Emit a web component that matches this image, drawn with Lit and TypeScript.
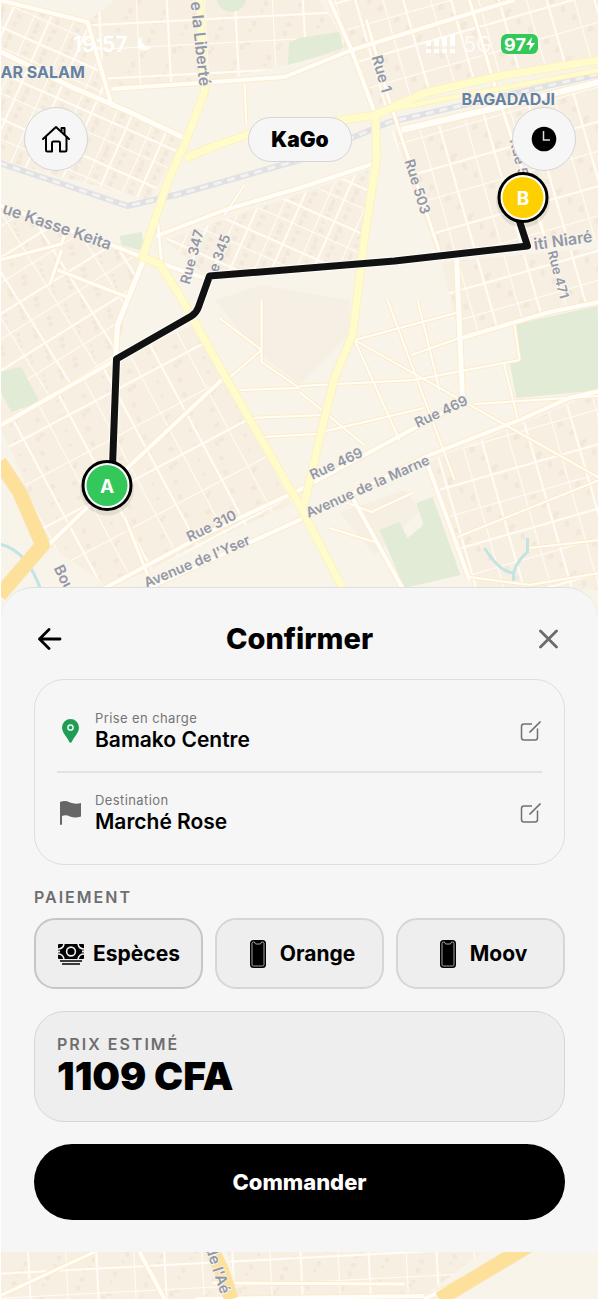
import { LitElement, html, svg, css } from 'lit';
import { customElement, property, state } from 'lit/decorators.js';
import { classMap } from 'lit/directives/class-map.js';

const DISTRICTS = [
  { fill: 'streets-a', points: '0,0 88,20 112,105 185,138 150,200 0,160' },
  { fill: 'streets-c', points: '115,0 320,0 350,50 205,84 112,90 90,20' },
  { fill: 'streets-b', points: '330,0 600,0 600,60 420,95 376,112' },
  { fill: 'streets-b', points: '392,132 600,85 600,240 528,245 440,258' },
  { fill: 'streets-b', points: '442,262 600,248 600,302 460,338' },
  { fill: 'streets-e', points: '0,205 140,257 116,358 0,422' },
  { fill: 'streets-d', points: '0,426 116,360 200,322 300,500 110,588 50,545 20,470' },
  { fill: 'streets-a', points: '165,240 370,170 358,262 210,278' },
  { fill: 'streets-b', points: '430,462 600,392 600,590 474,588' },
  { fill: 'streets-c', points: '0,1240 200,1240 232,1299 0,1299' },
  { fill: 'streets-c', points: '225,1240 500,1240 420,1299 240,1299' },
];

const ROADS = [
  { width: 4, d: 'M0,0 L88,22 L112,105' },
  { width: 5, d: 'M0,51 L70,86 L130,112 L185,138' },
  { width: 4, d: 'M112,89 L285,77 L352,50 L472,13 L515,0' },
  { width: 4, d: 'M330,0 L352,50 L376,115' },
  { width: 3, d: 'M367,20 L388,95 L440,252' },
  { width: 3, d: 'M470,0 L498,95 L548,245' },
  { width: 6, d: 'M402,130 L500,107 L600,82' },
  { width: 4, d: 'M157,236 L225,210 L300,188 L376,163' },
  { width: 3, d: 'M158,220 L162,262' },
  { width: 4, d: 'M0,205 L112,245 L145,258 L205,278' },
  { width: 3, d: 'M0,260 L62,244 L68,226' },
  { width: 3, d: 'M58,270 L130,298 M62,250 L50,285' },
  { width: 5, d: 'M144,260 L118,325 L116,358' },
  { width: 4, d: 'M0,426 L116,360' },
  { width: 4, d: 'M48,546 L130,466 L222,380' },
  { width: 4, d: 'M98,592 L210,532 L300,490 L467,400' },
  { width: 4, d: 'M140,592 L300,520 L430,455 L520,420 L570,398 L600,391' },
  { width: 5, d: 'M457,258 L463,398' },
  { width: 4, d: 'M462,338 L550,312 L600,302' },
  { width: 4, d: 'M352,496 L405,592' },
  { width: 4, d: 'M428,464 L470,580' },
  { width: 3, d: 'M125,517 L155,592' },
  { width: 2, d: 'M355,340 L600,478 M300,386 L415,380 L520,360' },
  { width: 2, d: 'M355,340 L400,440 M388,300 L455,480 M418,300 L440,390' },
  { width: 2, d: 'M355,340 L460,312 M412,355 L460,338 M504,362 L518,418' },
  { width: 2, d: 'M475,404 L600,396 M300,392 L365,445 M322,432 L425,408' },
  { width: 2, d: 'M227,380 L262,350 L220,318 M262,300 L262,362 L300,388 M240,390 L300,388' },
  { width: 2, d: 'M250,418 L322,415 M262,437 L318,434 M340,500 L372,512 L415,492' },
  { width: 2, d: 'M458,537 L600,480 M530,548 L600,540 M470,577 L530,585 L600,573' },
  { width: 2, d: 'M515,325 L520,360 M330,528 L375,542 M245,185 L225,215 M245,85 L247,125' },
  { width: 4, d: 'M518,1252 L425,1299' },
  { width: 4, d: 'M140,1252 L165,1299 M196,1299 L425,1296' },
  { width: 3, d: 'M95,1252 L0,1296 M213,1283 L405,1284' },
];

const AVENUES = [
  { width: 7, d: 'M200,0 L205,92 L186,142 L168,182 L143,257 L160,264 L180,295 L222,370 L258,433 L300,505 L345,592' },
  { width: 7, d: 'M186,158 L215,146 L250,134 L376,115 L425,93 L500,76 L600,60' },
  { width: 4, d: 'M376,112 L450,98 L600,70' },
  { width: 7, d: 'M376,115 L377,160 L366,230 L353,335 L335,378 L322,430 L308,490 L303,510' },
];

const HIGHWAYS = [
  { width: 13, d: 'M0,462 L20,492 L43,545 L0,595' },
  { width: 13, d: 'M210,1245 L222,1270 L232,1299' },
  { width: 13, d: 'M530,1245 L440,1299' },
];

const PLACES = [
  { x: 1, y: 78, text: 'AR SALAM' },
  { x: 462, y: 105, text: 'BAGADADJI' },
];

const STREET_NAMES = [
  { x: 191, y: 2, angle: 84, size: 16, text: 'e la Liberté' },
  { x: 372, y: 57, angle: 74, size: 15, text: 'Rue 1' },
  { x: 405, y: 161, angle: 73, size: 14, text: 'Rue 503' },
  { x: 510, y: 140, angle: 76, size: 14, text: 'Rue 5' },
  { x: 2, y: 213, angle: 19, size: 16, text: 'ue Kasse Keita' },
  { x: 190, y: 285, angle: -75, size: 14, text: 'Rue 347' },
  { x: 218, y: 273, angle: -70, size: 14, text: 'e 345' },
  { x: 535, y: 250, angle: -8, size: 16, text: 'iti Niaré' },
  { x: 548, y: 252, angle: 75, size: 13, text: 'Rue 471' },
  { x: 418, y: 428, angle: -25, size: 14, text: 'Rue 469' },
  { x: 313, y: 480, angle: -25, size: 14, text: 'Rue 469' },
  { x: 309, y: 518, angle: -24, size: 14, text: 'Avenue de la Marne' },
  { x: 190, y: 542, angle: -26, size: 14, text: 'Rue 310' },
  { x: 147, y: 588, angle: -23, size: 14, text: "Avenue de l'Yser" },
  { x: 54, y: 568, angle: 64, size: 15, text: 'Bou' },
  { x: 206, y: 1248, angle: 72, size: 15, text: "de l'Aé" },
];

const ROUTE = 'M113,466 L117,359 L192,316 Q197,313 199,307 L210,276 L395,261 L528,246 L518,215';

@customElement('city-map')
export class CityMap extends LitElement {
  static styles = css`
    :host {
      display: block;
      overflow: hidden;
    }

    svg {
      display: block;
      width: 100%;
      height: 100%;
      fill: none;
      stroke-linejoin: round;
    }

    .land { fill: #f9f4ea; }
    .park { fill: #e1ebd5; }
    .square { fill: #f6efe4; }
    .block { fill: #f7efe2; }
    .building { fill: #f1e8da; }
    .street-edge { stroke: #fdf0da; stroke-width: 3; }
    .street { stroke: #fffdf8; stroke-width: 2; }
    .casing { stroke: #fdebc8; }
    .road { stroke: #fffefb; }
    .avenue-casing { stroke: #fbf1c4; }
    .avenue { stroke: #fffbcb; }
    .highway-casing { stroke: #fae3ab; }
    .highway { stroke: #fde19b; }
    .rail { stroke: #e0e1e5; stroke-width: 6; }
    .rail-ties { stroke: #f4f2ee; stroke-width: 3; stroke-dasharray: 8 6; }
    .water { stroke: #c4e4e4; stroke-width: 3; }

    text { font-family: Inter, 'Liberation Sans', sans-serif; }

    .place {
      fill: #6682a3;
      stroke: #f9f4ea;
      stroke-width: 2;
      paint-order: stroke;
      font-size: 16px;
      font-weight: 700;
    }

    .street-name {
      fill: #9398a8;
      stroke: #f9f4ea;
      stroke-width: 2;
      paint-order: stroke;
      font-weight: 600;
    }

    .route-halo { stroke: #fff; stroke-width: 9; opacity: 0.8; }
    .route { stroke: #111; stroke-width: 7; }
    .marker-shadow { fill: #000; opacity: 0.08; }
    .marker-ring { fill: #fff; stroke: #000; stroke-width: 3; }
    .marker-start { fill: #34c759; }
    .marker-end { fill: #ffd000; }

    .marker-label {
      fill: #fff;
      font-size: 19px;
      font-weight: 700;
      text-anchor: middle;
    }
  `;

  // one tile holds 2x2 uneven blocks, so the streets do not look like graph paper
  pattern(id: string, width: number, height: number, angle: number) {
    const w = width * 2;
    const h = height * 2;
    const streets = `M0,0 H${w} M0,${height + 3} H${w} M0,0 V${h} M${width - 3},0 V${h}`;
    const buildings = Array.from({ length: 14 }, (_, i) => ({
      x: (i * 17 + 5) % (w - 4),
      y: (i * 23 + 4) % (h - 4),
      width: 3 + (i % 3),
      height: 3 + ((i * 2) % 3),
    }));
    return svg`
      <pattern id=${id} width=${w} height=${h} patternUnits="userSpaceOnUse"
        patternTransform="rotate(${angle})">
        <rect class="block" width=${w} height=${h}></rect>
        ${buildings.map((b) => svg`<rect class="building" x=${b.x} y=${b.y} width=${b.width} height=${b.height}></rect>`)}
        <path class="street-edge" d=${streets}></path>
        <path class="street" d=${streets}></path>
      </pattern>
    `;
  }

  lines(roads: { width: number; d: string }[], name: string, extra = 0) {
    return roads.map((r) => svg`<path class=${name} d=${r.d} stroke-width=${r.width + extra}></path>`);
  }

  marker(x: number, y: number, label: string, name: string) {
    return svg`
      <circle class="marker-shadow" cx=${x} cy=${y + 3} r="27"></circle>
      <circle class="marker-ring" cx=${x} cy=${y} r="24"></circle>
      <circle class=${name} cx=${x} cy=${y} r="20.500"></circle>
      <text class="marker-label" x=${x} y=${y + 7}>${label}</text>
    `;
  }

  render() {
    return html`
      <svg viewBox="0 0 600 1299" preserveAspectRatio="xMidYMid slice" role="img" aria-label="Bamako">
        <defs>
          ${this.pattern('streets-a', 19, 21, 24)}
          ${this.pattern('streets-b', 23, 31, -16)}
          ${this.pattern('streets-c', 34, 27, -3)}
          ${this.pattern('streets-d', 26, 44, -28)}
          ${this.pattern('streets-e', 28, 24, -32)}
        </defs>
        <rect class="land" width="600" height="1299"></rect>
        ${DISTRICTS.map((d) => svg`<polygon points=${d.points} fill="url(#${d.fill})"></polygon>`)}
        <polygon class="square" points="215,300 262,285 350,300 350,335 300,385 258,352"></polygon>
        <polygon class="square" points="375,555 340,512 405,490 422,510"></polygon>
        <polygon class="park" points="513,325 598,306 600,390 517,398 510,362 520,358"></polygon>
        <polygon class="park" points="380,530 400,522 408,538 424,525 417,503 433,497 461,575 405,588"></polygon>
        <polygon class="park" points="0,372 22,367 40,402 12,412 0,390"></polygon>
        <polygon class="park" points="300,38 340,32 344,48 300,62 288,65 290,42"></polygon>
        <polygon class="park" points="120,236 142,232 146,252 122,245"></polygon>
        <circle class="park" cx="232" cy="-3" r="15"></circle>
        <path class="rail" d="M0,163 L60,183 L128,206 L180,194 L300,160 L390,122 L600,74"></path>
        <path class="rail-ties" d="M0,163 L60,183 L128,206 L180,194 L300,160 L390,122 L600,74"></path>
        <path class="water" d="M0,544 Q28,550 42,592 M485,548 Q500,572 514,573 Q518,560 528,552 V538 M514,573 V582"></path>
        ${this.lines(ROADS, 'casing', 2)}
        ${this.lines(ROADS, 'road')}
        ${this.lines(AVENUES, 'avenue-casing', 2)}
        ${this.lines(AVENUES, 'avenue')}
        ${this.lines(HIGHWAYS, 'highway-casing', 2)}
        ${this.lines(HIGHWAYS, 'highway')}
        ${PLACES.map((p) => svg`<text class="place" x=${p.x} y=${p.y}>${p.text}</text>`)}
        ${STREET_NAMES.map((s) => svg`
          <text class="street-name" font-size=${s.size} transform="translate(${s.x} ${s.y}) rotate(${s.angle})">${s.text}</text>
        `)}
        <path class="route-halo" d=${ROUTE}></path>
        <path class="route" d=${ROUTE}></path>
        ${this.marker(107.5, 485.5, 'A', 'marker-start')}
        ${this.marker(523.5, 197.5, 'B', 'marker-end')}
      </svg>
    `;
  }
}

const editIcon = html`
  <svg width="22" height="22" viewBox="0 0 22 22" fill="none" stroke="#707070" aria-hidden="true">
    <path d="M12,4 H4 Q1.500,4 1.500,6.500 V17.500 Q1.500,20 4,20 H15 Q17.500,20 17.500,17.500 V8.500" stroke-width="1.500"></path>
    <path d="M9.500,12.500 L20.500,1.500" stroke-width="1.700"></path>
  </svg>
`;

@customElement('trip-stop')
export class TripStop extends LitElement {
  static styles = css`
    :host {
      display: flex;
      align-items: center;
      height: 80px;
    }

    .icon {
      display: flex;
      width: 38px;
    }

    .text {
      flex: 1;
      color: #000;
    }

    .label {
      color: #757575;
      font-size: 13px;
      line-height: 18px;
      letter-spacing: 0.4px;
    }

    .value {
      font-size: 21px;
      font-weight: 600;
      line-height: 26px;
    }

    button {
      display: flex;
      padding: 2px 0;
      border: 0;
      background: none;
      cursor: pointer;
    }
  `;

  @property() label = '';
  @property() value = '';

  render() {
    return html`
      <span class="icon"><slot></slot></span>
      <div class="text">
        <div class="label">${this.label}</div>
        <div class="value">${this.value}</div>
      </div>
      <button aria-label="Modifier">${editIcon}</button>
    `;
  }
}

const cashIcon = html`
  <svg width="28" height="24" viewBox="0 0 28 24" aria-hidden="true">
    <rect x="1" y="2" width="26" height="15" rx="1"></rect>
    <g fill="none" stroke="#eee" stroke-width="1.600">
      <circle cx="14" cy="9.500" r="4.400"></circle>
      <path d="M1,7 Q6,7 7,2 M27,7 Q22,7 21,2 M1,12 Q6,12 7,17 M27,12 Q22,12 21,17"></path>
      <path d="M0,9.500 H3 M25,9.500 H28" stroke-width="2"></path>
    </g>
    <path d="M3,19 H25 M5,22 H23" stroke="#000" stroke-width="1.700"></path>
  </svg>
`;

const phoneIcon = html`
  <svg width="28" height="28" viewBox="0 0 28 28" aria-hidden="true">
    <rect x="6" y="0" width="16" height="28" rx="3.500"></rect>
    <path d="M10.500,2 H9.500 Q8,2 8,3.500 V24.500 Q8,26 9.500,26 H18.500 Q20,26 20,24.500 V3.500 Q20,2 18.500,2 H17.500 Q17,4 16,4 H12 Q11,4 10.500,2 Z"
      fill="none" stroke="#d0d0d0" stroke-width="0.800"></path>
  </svg>
`;

const PAYMENTS = [
  { id: 'cash', name: 'Espèces', icon: cashIcon },
  { id: 'orange', name: 'Orange', icon: phoneIcon },
  { id: 'moov', name: 'Moov', icon: phoneIcon },
];

@customElement('app-root')
export class AppRoot extends LitElement {
  static styles = css`
    :host {
      display: block;
      padding: 0 2px 0 1px;
      background: #fff;
      color: #000;
      font-family: Inter, 'Liberation Sans', sans-serif;
    }

    .screen {
      position: relative;
      display: flex;
      flex-direction: column;
      box-sizing: border-box;
      min-height: 100vh;
      padding-bottom: 47px;
    }

    city-map {
      position: absolute;
      inset: 0;
    }

    .status,
    .topbar,
    .sheet {
      position: relative;
    }

    button {
      padding: 0;
      border: 0;
      background: none;
      color: inherit;
      font-family: inherit;
      cursor: pointer;
    }

    svg {
      display: block;
      flex: none;
    }

    .status {
      display: flex;
      align-items: center;
      justify-content: space-between;
      height: 22px;
      padding: 33px 60px 0 72px;
      color: #fff;
      font-size: 21px;
      font-weight: 600;
    }

    .status-group {
      display: flex;
      align-items: center;
      gap: 9px;
    }

    .network {
      font-weight: 400;
      opacity: 0.8;
    }

    .battery {
      display: flex;
      align-items: center;
      justify-content: center;
      width: 37px;
      height: 20px;
      border-radius: 6px;
      background: #34c759;
      font-size: 18px;
      font-weight: 700;
    }

    .topbar {
      display: flex;
      align-items: center;
      justify-content: space-between;
      padding: 52px 22px 0 23px;
    }

    .round,
    .brand {
      display: flex;
      align-items: center;
      justify-content: center;
      box-sizing: border-box;
      border: 1px solid #d5d5da;
      background: #f6f6f6;
    }

    .round {
      width: 64px;
      height: 64px;
      border-radius: 32px;
    }

    .brand {
      height: 45px;
      padding: 0 22px;
      border-radius: 23px;
      font-size: 21px;
      font-weight: 900;
    }

    .sheet {
      margin-top: auto;
      padding: 28px 33px 32px;
      border-top: 1px solid #e0e0e0;
      border-radius: 32px 32px 0 0;
      background: #f6f6f6;
    }

    .sheet-header {
      display: flex;
      align-items: center;
      justify-content: space-between;
      height: 46px;
    }

    .sheet-header button {
      display: flex;
      justify-content: center;
      width: 32px;
    }

    h1 {
      margin: 0;
      font-size: 29px;
      font-weight: 800;
      line-height: 36px;
    }

    .trip {
      margin-top: 17px;
      padding: 11px 22px;
      border: 1px solid #dedede;
      border-radius: 30px;
    }

    .trip trip-stop + trip-stop {
      border-top: 2px solid #e2e2e2;
    }

    .caption {
      margin: 0;
      color: #6e6e6e;
      font-size: 16px;
      font-weight: 600;
      line-height: 20px;
      letter-spacing: 2px;
    }

    .payments {
      display: grid;
      grid-template-columns: repeat(3, 1fr);
      gap: 12px;
      margin: 11px 0 22px;
    }

    .trip + .caption {
      margin-top: 22px;
    }

    .payment {
      display: flex;
      align-items: center;
      justify-content: center;
      gap: 8px;
      height: 71px;
      border: 2px solid #d6d6d6;
      border-radius: 21px;
      background: #eee;
      font-size: 21px;
      font-weight: 700;
    }

    .payment.selected {
      border-color: #c6c6c6;
    }

    .price {
      padding: 22px 22px 23px;
      border: 1px solid #d6d6d6;
      border-radius: 30px;
      background: #eee;
    }

    .amount {
      font-size: 39px;
      font-weight: 900;
      line-height: 44px;
    }

    .order {
      width: 100%;
      height: 76px;
      margin-top: 22px;
      border-radius: 38px;
      background: #000;
      color: #fff;
      font-size: 22px;
      font-weight: 800;
    }
  `;

  @state() payment = 'cash';

  render() {
    return html`
      <main class="screen">
        <city-map></city-map>

        <div class="status">
          <div class="status-group">
            <span>19:57</span>
            <svg width="16" height="16" viewBox="0 0 16 16" fill="#fff"><path d="M6,1 A7,7 0 1 0 15,10 A7,7 0 0 1 6,1 Z"></path></svg>
          </div>
          <div class="status-group">
            <svg width="30" height="20" viewBox="0 0 30 20" fill="#fff">
              <path d="M1,7 h5 v5 h-5 z M9,5 h5 v7 h-5 z M17,3 h5 v9 h-5 z M25,0 h5 v12 h-5 z"></path>
              <path d="M1,15 h5 v4 h-5 z M9,15 h5 v4 h-5 z M17,15 h5 v4 h-5 z M25,15 h5 v4 h-5 z"></path>
            </svg>
            <span class="network">5G</span>
            <span class="battery">97<svg width="9" height="14" viewBox="0 0 9 14" fill="#fff"><path d="M6,0 L0,8 H4 L3,14 L9,6 H5 Z"></path></svg></span>
          </div>
        </div>

        <div class="topbar">
          <button class="round" aria-label="Accueil">
            <svg width="30" height="30" viewBox="0 0 30 30" fill="none" stroke="#000" stroke-width="2" stroke-linejoin="round" stroke-linecap="round">
              <path d="M2,15 L15,3 L28,15"></path>
              <path d="M5,13 V26 Q5,27.500 6.500,27.500 H11 V19 Q11,17.500 12.500,17.500 H17.500 Q19,17.500 19,19 V27.500 H24 Q25.500,27.500 25.500,26 V13"></path>
              <path d="M20.500,7 V4 H23.500 V10.500"></path>
            </svg>
          </button>
          <div class="brand">KaGo</div>
          <button class="round" aria-label="Historique">
            <svg width="26" height="26" viewBox="0 0 26 26" fill="none">
              <circle cx="13" cy="13" r="12.300" fill="#000"></circle>
              <path d="M12.500,5 V14 H19" stroke="#ddd" stroke-width="1.500"></path>
            </svg>
          </button>
        </div>

        <section class="sheet">
          <header class="sheet-header">
            <button aria-label="Retour">
              <svg width="24" height="24" viewBox="0 0 24 24" fill="none" stroke="#000" stroke-width="2.800" stroke-linecap="round" stroke-linejoin="round">
                <path d="M22,12 H1.500 M11,2.500 L1.500,12 L11,21.500"></path>
              </svg>
            </button>
            <h1>Confirmer</h1>
            <button aria-label="Fermer">
              <svg width="20" height="20" viewBox="0 0 20 20" fill="none" stroke="#6b6b6b" stroke-width="2.800" stroke-linecap="round">
                <path d="M1.500,2 L17.500,18 M17.500,2 L1.500,18"></path>
              </svg>
            </button>
          </header>

          <div class="trip">
            <trip-stop label="Prise en charge" value="Bamako Centre">
              <svg width="26" height="26" viewBox="0 0 26 26">
                <path d="M13.500,1 A8.500,8.500 0 0 0 5,9.500 C5,14.500 10,19 12,23.500 Q13.500,26 15,23.500 C17,19 22,14.500 22,9.500 A8.500,8.500 0 0 0 13.500,1 Z" fill="#1f9d55"></path>
                <circle cx="13.500" cy="9.500" r="2.600" fill="none" stroke="#eafff2" stroke-width="1.500"></circle>
              </svg>
            </trip-stop>
            <trip-stop label="Destination" value="Marché Rose">
              <svg width="26" height="26" viewBox="0 0 26 26" fill="#666">
                <path d="M3,2 Q8,0 13,2.500 Q18,4.500 24,3 V16.500 Q18,18.500 13,16.500 Q9,14.500 5,16 V24 Q5,25 4,25 Q3,25 3,24 Z"></path>
              </svg>
            </trip-stop>
          </div>

          <h2 class="caption">PAIEMENT</h2>
          <div class="payments">
            ${PAYMENTS.map((p) => html`
              <button
                class=${classMap({ payment: true, selected: this.payment === p.id })}
                aria-pressed=${this.payment === p.id}
                @click=${() => (this.payment = p.id)}
              >
                ${p.icon}<span>${p.name}</span>
              </button>
            `)}
          </div>

          <div class="price">
            <h2 class="caption">PRIX ESTIMÉ</h2>
            <div class="amount">1109 CFA</div>
          </div>

          <button class="order">Commander</button>
        </section>
      </main>
    `;
  }
}
